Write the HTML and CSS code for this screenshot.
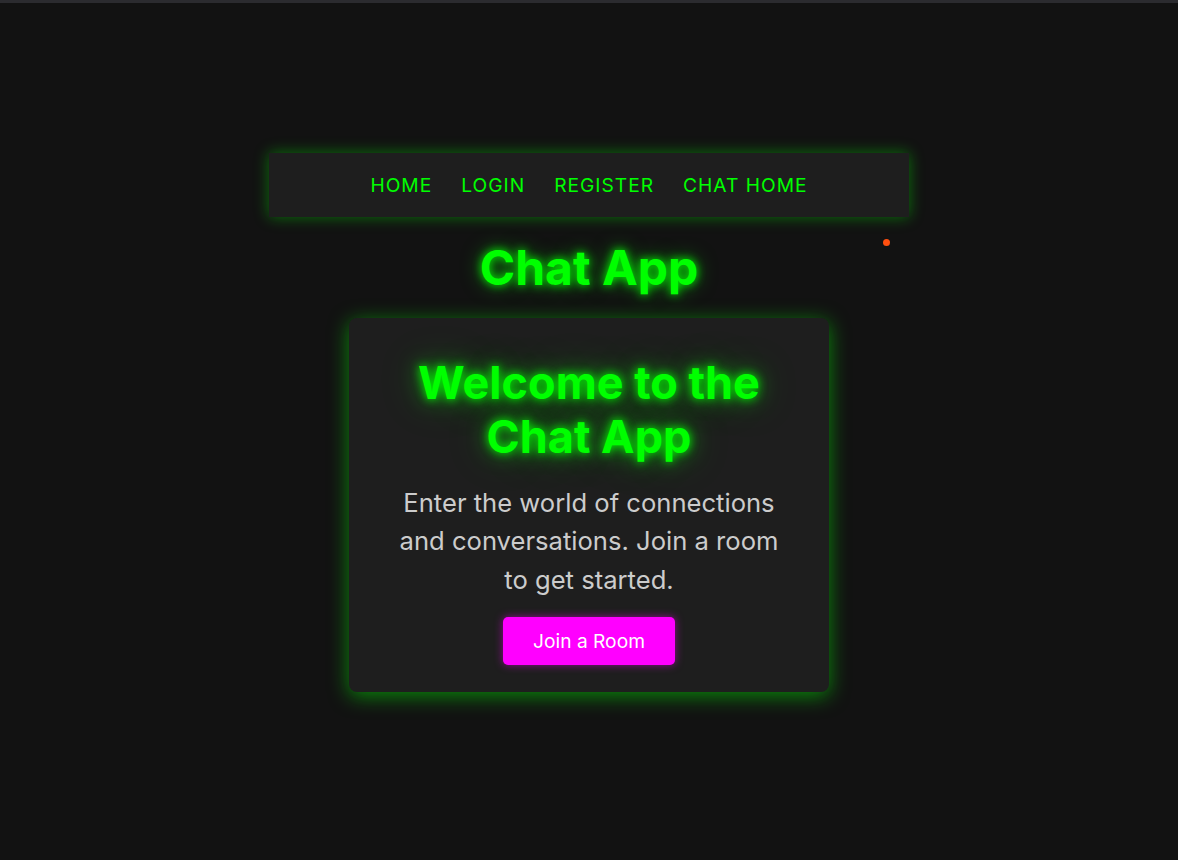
FILE: index.html
```html
<!DOCTYPE html>
<html lang="en">
<head>
<meta charset="utf-8">
<title>Chat App</title>
<link rel="stylesheet" href="styles.css">
</head>
<body>
<div class="topbar"></div>
<div class="page">
  <nav class="nav">
    <a href="#" class="nav-link">HOME</a>
    <a href="#" class="nav-link">LOGIN</a>
    <a href="#" class="nav-link">REGISTER</a>
    <a href="#" class="nav-link">CHAT HOME</a>
  </nav>
  <h1 class="title">Chat App</h1>
  <section class="card">
    <h2 class="card-title">Welcome to the Chat App</h2>
    <p class="card-text">Enter the world of connections and conversations. Join a room to get started.</p>
    <button class="btn">Join a Room</button>
  </section>
</div>
<span class="dot"></span>
</body>
</html>
```
FILE: styles.css
```css
* { box-sizing: border-box; }
html, body { margin: 0; padding: 0; }
body {
  background: #121212;
  font-family: Inter, "Noto Sans", sans-serif;
  height: 860px;
  overflow: hidden;
  position: relative;
}
.topbar {
  height: 3px;
  background: #2b2b2f;
}
.page {
  display: flex;
  flex-direction: column;
  align-items: center;
  padding-top: 150px;
}
.nav {
  width: 640px;
  height: 64px;
  background: #1e1e1e;
  display: flex;
  justify-content: center;
  align-items: center;
  gap: 29px;
  box-shadow: 0 0 14px rgba(0, 255, 0, 0.4);
}
.nav-link {
  color: #00ff00;
  text-decoration: none;
  font-size: 19.2px;
  letter-spacing: 1px;
}
.title {
  margin: 22px 0 21px;
  font-size: 48px;
  line-height: 58px;
  font-weight: 700;
  color: #00ff00;
  text-shadow: 0 0 10px #00ff00, 0 0 20px rgba(0, 255, 0, 0.5);
}
.card {
  width: 480px;
  background: #1e1e1e;
  border-radius: 8px;
  padding: 38px 50px 27px;
  text-align: center;
  box-shadow: 0 4px 20px rgba(0, 255, 0, 0.5);
}
.card-title {
  margin: 0 0 20px;
  font-size: 45px;
  line-height: 54px;
  font-weight: 700;
  color: #00ff00;
  text-shadow: 0 0 10px #00ff00, 0 0 20px rgba(0, 255, 0, 0.5), 0 0 40px rgba(0, 255, 0, 0.35);
}
.card-text {
  margin: 0 0 18px;
  font-size: 25.6px;
  line-height: 38.4px;
  color: #cccccc;
}
.btn {
  font-family: inherit;
  font-size: 19.2px;
  color: #ffffff;
  background: #ff00ff;
  border: none;
  border-radius: 5px;
  padding: 0 30px;
  height: 48px;
  box-shadow: 0 0 8px rgba(255, 0, 255, 0.5);
}
.dot {
  position: absolute;
  left: 883px;
  top: 239px;
  width: 7px;
  height: 7px;
  border-radius: 50%;
  background: #ff4f0f;
}
```
